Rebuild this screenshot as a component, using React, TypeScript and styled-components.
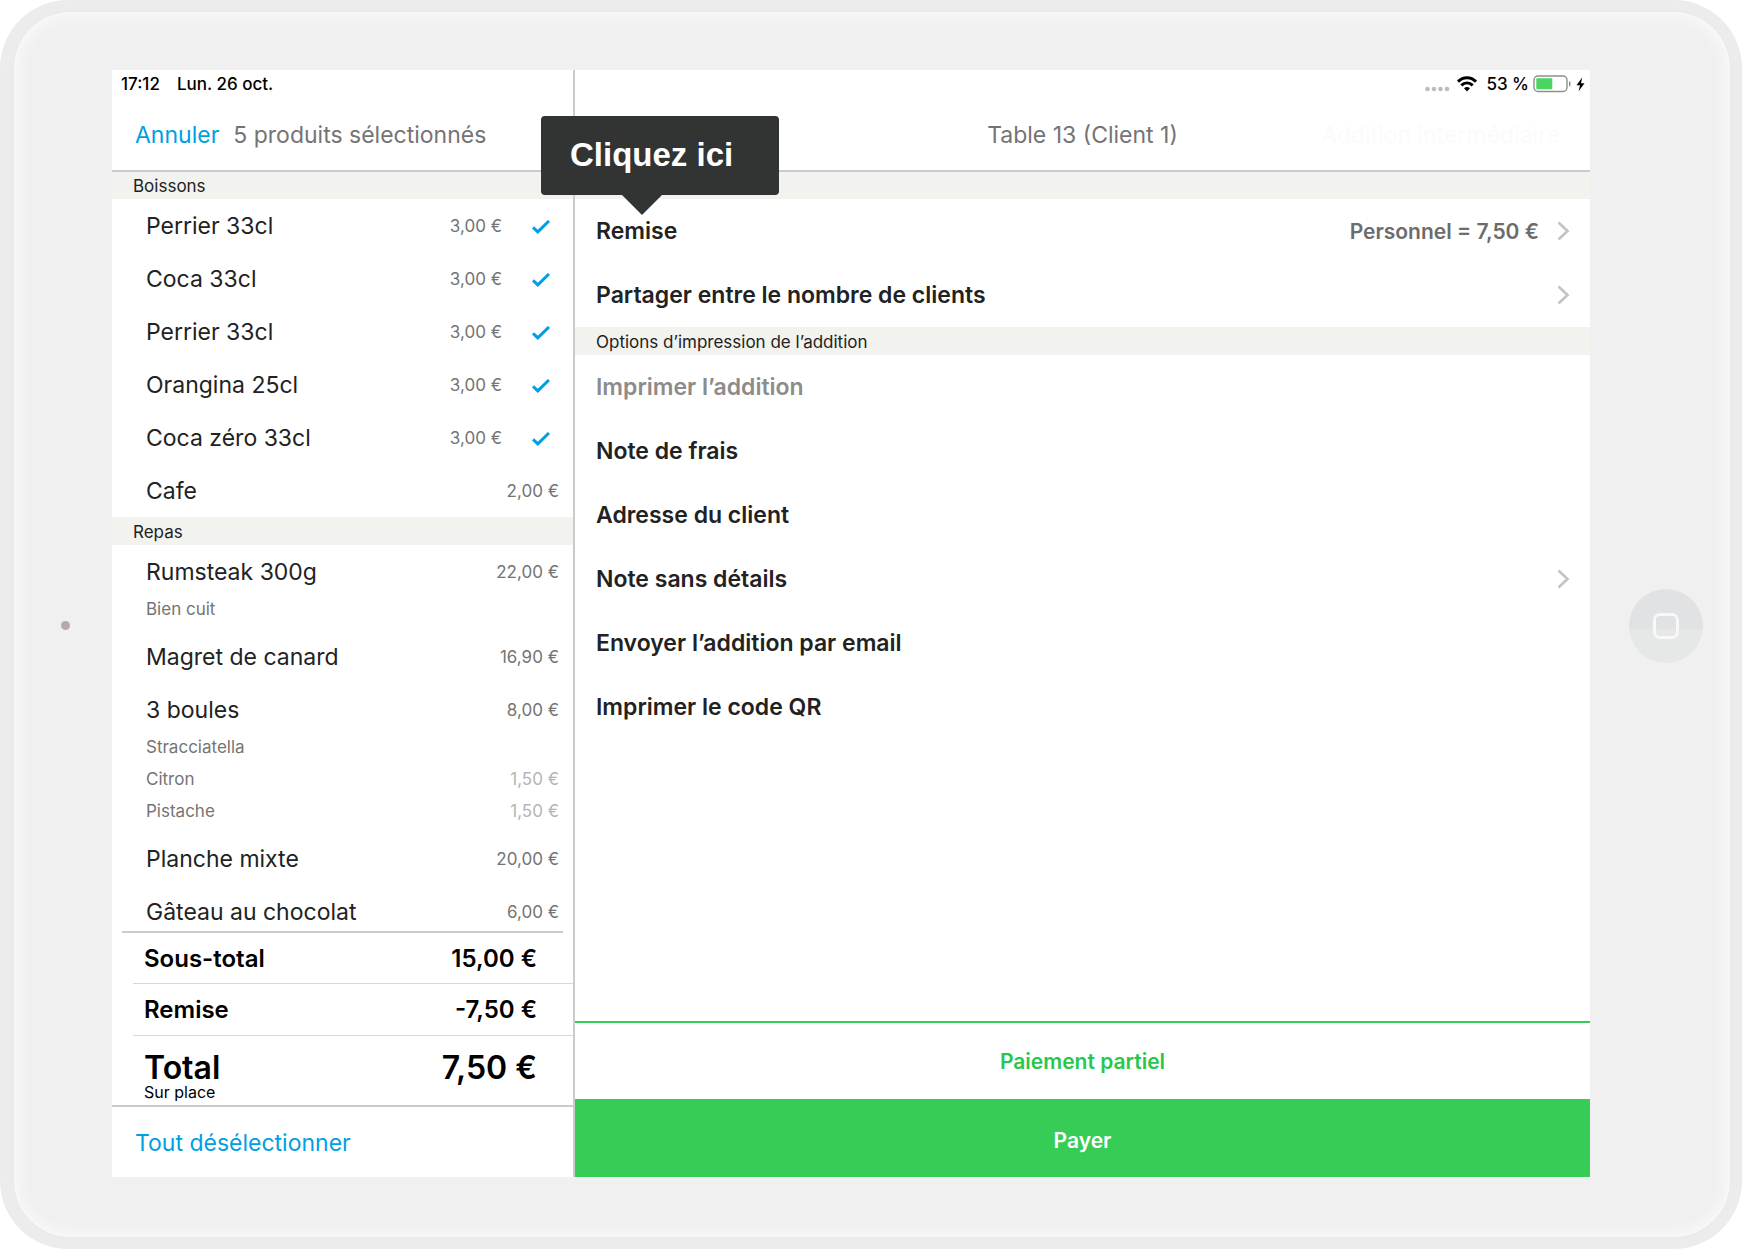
import React, { useState } from "react";
import styled, { createGlobalStyle, css } from "styled-components";

const color = {
  blue: "#009fe3",
  green: "#37cc56",
  ink: "#222222",
  grey: "#747474",
  faint: "#b4b4b4",
  band: "#f2f2ee",
  line: "#cbcbcb",
};

const GlobalStyle = createGlobalStyle`
  *, *::before, *::after { box-sizing: border-box; }
  body {
    margin: 0;
    background: #ffffff;
    font-family: Inter, "Liberation Sans", sans-serif;
    color: ${color.ink};
  }
  h1, h2, ul, dl, dd, dt, p { margin: 0; padding: 0; font: inherit; }
  ul { list-style: none; }
  button { font: inherit; color: inherit; background: none; border: 0; padding: 0; cursor: pointer; }
`;

const Device = styled.div`
  min-height: 100vh;
  padding: 12px 12px 12px 14px;
  display: flex;
  background: #ececec;
  border-radius: 68px;
`;

const Bezel = styled.div`
  flex: 1;
  min-width: 0;
  display: grid;
  grid-template-columns: 98px minmax(0, 1fr) 140px;
  padding: 58px 0 60px;
  background: #f0f0f0;
  border-radius: 56px;
  box-shadow: 0 0 2px #e2e2e2, inset 0 0 14px 3px #fbfbfb;
`;

const Side = styled.div<{ $home?: boolean }>`
  display: flex;
  align-items: center;
  justify-content: center;
  padding-top: 4px;
  padding-left: ${(p) => (p.$home ? 12 : 4)}px;
`;

const Camera = styled.span`
  width: 9px;
  height: 9px;
  border-radius: 50%;
  background: #b4aaaa;
`;

const HomeButton = styled.button`
  width: 74px;
  height: 74px;
  border-radius: 50%;
  display: grid;
  place-items: center;
  background: linear-gradient(#e1e2e4 54%, #e6e8e7 54%);
`;

const HomeGlyph = styled.span`
  width: 26px;
  height: 26px;
  border: 3px solid #f8f8f8;
  border-radius: 7px;
`;

const Screen = styled.main`
  display: grid;
  grid-template-columns: minmax(0, 463fr) minmax(0, 1015fr);
  background: #ffffff;
`;

const OrderPane = styled.section`
  display: flex;
  flex-direction: column;
  min-width: 0;
  border-right: 2px solid #cbcbcd;
`;

const DetailPane = styled.section`
  display: flex;
  flex-direction: column;
  min-width: 0;
`;

const StatusBar = styled.div<{ $end?: boolean }>`
  height: 28px;
  padding: 0 5px 0 9px;
  display: flex;
  align-items: center;
  justify-content: ${(p) => (p.$end ? "flex-end" : "flex-start")};
  gap: ${(p) => (p.$end ? 4 : 17)}px;
  font-size: 17px;
  font-weight: 500;
  color: #000000;

  svg { display: block; flex: none; }
`;

const Header = styled.header<{ $split?: boolean }>`
  height: 74px;
  border-bottom: 2px solid ${color.line};
  align-items: center;
  font-size: 23px;
  color: ${color.grey};
  white-space: nowrap;
  ${(p) =>
    p.$split
      ? css`
          display: grid;
          grid-template-columns: 1fr auto 1fr;
          padding: 2px 30px 0;
        `
      : css`
          display: flex;
          gap: 14px;
          padding: 2px 23px 0;
        `}
`;

const HeaderTitle = styled.h1`
  grid-column: 2;
`;

const LinkButton = styled.button`
  color: ${color.blue};
`;

const GhostButton = styled.button`
  justify-self: end;
  color: #fbfbfb;
`;

const Band = styled.h2<{ $top?: boolean }>`
  flex: none;
  height: ${(p) => (p.$top ? 27 : 28)}px;
  padding: 0 21px;
  background: ${color.band};
  font-size: 17px;
  line-height: ${(p) => (p.$top ? 28 : 30)}px;
`;

const Products = styled.div`
  flex: 1 1 0;
  min-height: 0;
  overflow: hidden;
`;

const Item = styled.li`
  padding: 5px 14px 5px 34px;
`;

const ItemLine = styled.label`
  height: 43px;
  display: flex;
  align-items: center;
  font-size: 23px;
  cursor: pointer;
`;

const ItemName = styled.span`
  flex: 1;
  white-space: nowrap;
`;

const ItemCheckbox = styled.input`
  appearance: none;
  width: 0;
  height: 0;
  margin: 0;
`;

const Price = styled.span<{ $faint?: boolean }>`
  font-size: 17px;
  color: ${(p) => (p.$faint ? color.faint : color.grey)};
`;

const Tick = styled.svg`
  margin: 3px 9px 0 30px;
  width: 18px;
  height: 14px;
`;

const Extra = styled.p`
  height: 32px;
  display: flex;
  align-items: center;
  justify-content: space-between;
  font-size: 17px;
  color: ${color.grey};
`;

const Totals = styled.dl`
  color: #000000;
`;

const TotalRow = styled.div<{ $height: number; $first?: boolean }>`
  height: ${(p) => p.$height}px;
  margin-left: ${(p) => (p.$first ? 10 : 21)}px;
  margin-right: ${(p) => (p.$first ? 10 : 0)}px;
  padding-left: ${(p) => (p.$first ? 22 : 11)}px;
  padding-right: ${(p) => (p.$first ? 26 : 36)}px;
  border-top: ${(p) => (p.$first ? "2px solid #cbcbcb" : "1px solid #d6d6d8")};
  display: flex;
  align-items: center;
  justify-content: space-between;
  font-size: 24px;
  font-weight: 600;
`;

const GrandTotal = styled(TotalRow)`
  align-items: flex-start;
  padding-top: 14px;
  font-size: 32px;
  line-height: 36px;
`;

const Mode = styled.small`
  display: block;
  font-size: 16px;
  line-height: 12px;
  font-weight: 400;
`;

const PaneFooter = styled.footer`
  height: 72px;
  padding: 2px 23px 0;
  border-top: 2px solid ${color.line};
  display: flex;
  align-items: center;
  font-size: 23px;
`;

const OptionButton = styled.button`
  width: 100%;
  height: 64px;
  padding: 0 20px 0 21px;
  display: flex;
  align-items: center;
  text-align: left;
  font-size: 23px;
  font-weight: 600;

  &:disabled { color: #8c8c8c; }
`;

const OptionLabel = styled.span`
  flex: 1;
`;

const OptionValue = styled.span`
  margin-right: 18px;
  font-size: 21px;
  color: #6c6c6c;
`;

const Actions = styled.div`
  margin-top: auto;
`;

const ActionButton = styled.button<{ $primary?: boolean }>`
  display: block;
  width: 100%;
  height: 78px;
  font-size: 21px;
  font-weight: 600;
  padding-top: ${(p) => (p.$primary ? 4 : 0)}px;
  color: ${(p) => (p.$primary ? "#ffffff" : "#27c84a")};
  background: ${(p) => (p.$primary ? color.green : "#ffffff")};
  border-top: ${(p) => (p.$primary ? "0" : `2px solid ${color.green}`)};
`;

const FirstOption = styled.li`
  position: relative;
`;

const Hint = styled.div`
  position: absolute;
  left: -34px;
  bottom: 68px;
  width: 238px;
  height: 79px;
  padding: 0 29px;
  border-radius: 4px;
  background: #323433;
  color: #ffffff;
  font-family: "Liberation Sans", Arial, sans-serif;
  font-size: 33px;
  font-weight: 700;
  line-height: 78px;
  white-space: nowrap;

  &::after {
    content: "";
    position: absolute;
    top: 100%;
    left: 81px;
    border: 20px solid transparent;
    border-top-color: #323433;
    border-bottom: 0;
  }
`;

const ChevronSvg = styled.svg`
  width: 13px;
  height: 20px;
  flex: none;
`;

const Chevron = () => (
  <ChevronSvg viewBox="0 0 13 20" fill="none" stroke="#c2c2c7" strokeWidth="2.6" aria-hidden="true">
    <path d="M1.5 1.5 10.5 10 1.5 18.5" />
  </ChevronSvg>
);

const CheckMark = () => (
  <Tick viewBox="0 0 18 14" fill="none" stroke={color.blue} strokeWidth="3" aria-hidden="true">
    <path d="M1 7.4 5.8 11.9 17 1" />
  </Tick>
);

const SignalDots = () => (
  <svg width="25" height="16" viewBox="0 0 25 16" fill="#bcbcbc" aria-hidden="true">
    <circle cx="2.5" cy="13" r="2.3" />
    <circle cx="9" cy="13" r="2.3" />
    <circle cx="15.5" cy="13" r="2.3" />
    <circle cx="22" cy="13" r="2.3" />
  </svg>
);

const Wifi = () => (
  <svg width="28" height="16" viewBox="-3 0 28 16" fill="none" stroke="#000" strokeWidth="3" aria-hidden="true">
    <path d="M1 5.6C6.2.5 13.8.5 19 5.6" />
    <path d="M4.3 9.4c3.4-3.2 8-3.2 11.4 0" />
    <path d="M7 12.3C8.7 10.7 11.3 10.7 13 12.3L10 15.4Z" fill="#000" stroke="none" />
  </svg>
);

const Battery = () => (
  <svg width="39" height="18" viewBox="0 0 39 18" aria-hidden="true">
    <rect x="1" y="1" width="33" height="15.5" rx="4" fill="#fff" stroke="#8e8e8e" strokeWidth="1.4" />
    <rect x="3.3" y="3.3" width="16" height="11" rx="1" fill="#4cd461" />
    <path d="M36 6c2.2.8 2.2 4.8 0 5.6Z" fill="#8e8e8e" />
  </svg>
);

const Bolt = () => (
  <svg width="9" height="15" viewBox="0 0 9 15" aria-hidden="true">
    <path d="M6.2.5.5 8.3H4L2.6 14.3 8.5 6.2H5Z" fill="#000" />
  </svg>
);

type ExtraLine = { name: string; price?: string };
type Product = { id: string; name: string; price: string; extras?: ExtraLine[] };
type Option = { label: string; disabled?: boolean; more?: boolean };

const sections: { title: string; products: Product[] }[] = [
  {
    title: "Boissons",
    products: [
      { id: "b1", name: "Perrier 33cl", price: "3,00 €" },
      { id: "b2", name: "Coca 33cl", price: "3,00 €" },
      { id: "b3", name: "Perrier 33cl", price: "3,00 €" },
      { id: "b4", name: "Orangina 25cl", price: "3,00 €" },
      { id: "b5", name: "Coca zéro 33cl", price: "3,00 €" },
      { id: "b6", name: "Cafe", price: "2,00 €" },
    ],
  },
  {
    title: "Repas",
    products: [
      { id: "r1", name: "Rumsteak 300g", price: "22,00 €", extras: [{ name: "Bien cuit" }] },
      { id: "r2", name: "Magret de canard", price: "16,90 €" },
      {
        id: "r3",
        name: "3 boules",
        price: "8,00 €",
        extras: [
          { name: "Stracciatella" },
          { name: "Citron", price: "1,50 €" },
          { name: "Pistache", price: "1,50 €" },
        ],
      },
      { id: "r4", name: "Planche mixte", price: "20,00 €" },
      { id: "r5", name: "Gâteau au chocolat", price: "6,00 €" },
    ],
  },
];

const printOptions: Option[] = [
  { label: "Imprimer l’addition", disabled: true },
  { label: "Note de frais" },
  { label: "Adresse du client" },
  { label: "Note sans détails", more: true },
  { label: "Envoyer l’addition par email" },
  { label: "Imprimer le code QR" },
];

export default function App() {
  const [selected, setSelected] = useState<string[]>(["b1", "b2", "b3", "b4", "b5"]);
  const toggle = (id: string) =>
    setSelected((ids) => (ids.includes(id) ? ids.filter((i) => i !== id) : [...ids, id]));

  return (
    <>
      <GlobalStyle />
      <Device>
        <Bezel>
          <Side>
            <Camera />
          </Side>
          <Screen>
            <OrderPane>
              <StatusBar>
                <span>17:12</span>
                <span>Lun. 26 oct.</span>
              </StatusBar>
              <Header>
                <LinkButton type="button">Annuler</LinkButton>
                <span>{selected.length} produits sélectionnés</span>
              </Header>
              <Products>
                {sections.map((section, index) => (
                  <React.Fragment key={section.title}>
                    <Band $top={index === 0}>{section.title}</Band>
                    <ul>
                      {section.products.map((product) => (
                        <Item key={product.id}>
                          <ItemLine>
                            <ItemCheckbox
                              type="checkbox"
                              checked={selected.includes(product.id)}
                              onChange={() => toggle(product.id)}
                            />
                            <ItemName>{product.name}</ItemName>
                            <Price>{product.price}</Price>
                            {selected.includes(product.id) && <CheckMark />}
                          </ItemLine>
                          {product.extras?.map((extra) => (
                            <Extra key={extra.name}>
                              <span>{extra.name}</span>
                              {extra.price && <Price $faint>{extra.price}</Price>}
                            </Extra>
                          ))}
                        </Item>
                      ))}
                    </ul>
                  </React.Fragment>
                ))}
              </Products>
              <Totals>
                <TotalRow $height={52} $first>
                  <dt>Sous-total</dt>
                  <dd>15,00 €</dd>
                </TotalRow>
                <TotalRow $height={52}>
                  <dt>Remise</dt>
                  <dd>-7,50 €</dd>
                </TotalRow>
                <GrandTotal $height={70}>
                  <dt>
                    Total
                    <Mode>Sur place</Mode>
                  </dt>
                  <dd>7,50 €</dd>
                </GrandTotal>
              </Totals>
              <PaneFooter>
                <LinkButton type="button" onClick={() => setSelected([])}>
                  Tout désélectionner
                </LinkButton>
              </PaneFooter>
            </OrderPane>
            <DetailPane>
              <StatusBar $end>
                <SignalDots />
                <Wifi />
                <span>53 %</span>
                <Battery />
                <Bolt />
              </StatusBar>
              <Header $split>
                <HeaderTitle>Table 13 (Client 1)</HeaderTitle>
                <GhostButton type="button" disabled>
                  Addition intermédiaire
                </GhostButton>
              </Header>
              <Band $top aria-hidden="true" />
              <ul>
                <FirstOption>
                  <OptionButton type="button">
                    <OptionLabel>Remise</OptionLabel>
                    <OptionValue>Personnel = 7,50 €</OptionValue>
                    <Chevron />
                  </OptionButton>
                  <Hint role="tooltip">Cliquez ici</Hint>
                </FirstOption>
                <li>
                  <OptionButton type="button">
                    <OptionLabel>Partager entre le nombre de clients</OptionLabel>
                    <Chevron />
                  </OptionButton>
                </li>
              </ul>
              <Band>Options d’impression de l’addition</Band>
              <ul>
                {printOptions.map((option) => (
                  <li key={option.label}>
                    <OptionButton type="button" disabled={option.disabled}>
                      <OptionLabel>{option.label}</OptionLabel>
                      {option.more && <Chevron />}
                    </OptionButton>
                  </li>
                ))}
              </ul>
              <Actions>
                <ActionButton type="button">Paiement partiel</ActionButton>
                <ActionButton type="button" $primary>
                  Payer
                </ActionButton>
              </Actions>
            </DetailPane>
          </Screen>
          <Side $home>
            <HomeButton type="button" aria-label="Accueil">
              <HomeGlyph />
            </HomeButton>
          </Side>
        </Bezel>
      </Device>
    </>
  );
}
